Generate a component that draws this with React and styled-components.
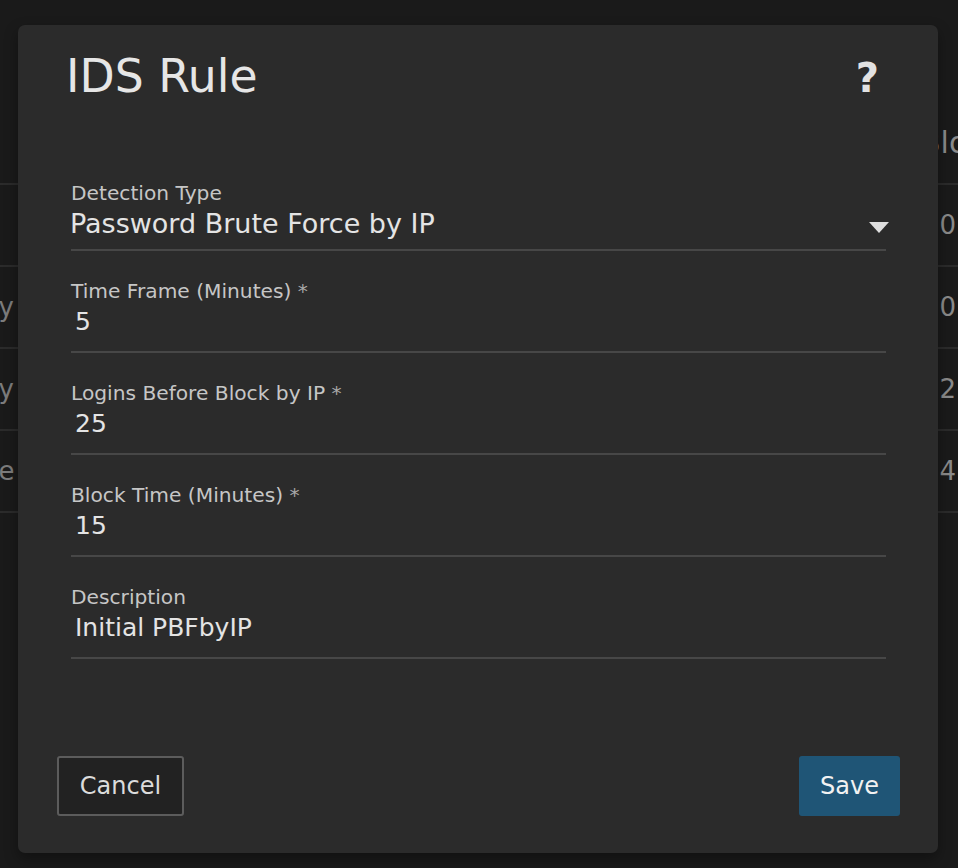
import React from "react";
import styled, { createGlobalStyle } from "styled-components";

const GlobalStyle = createGlobalStyle`
  html, body {
    margin: 0;
    background: #1a1a1a;
    font-family: "DejaVu Sans", "Noto Sans", sans-serif;
  }
  * { box-sizing: border-box; }
`;

const Page = styled.div`
  position: relative;
  width: 958px;
  height: 868px;
  overflow: hidden;
  background: #1a1a1a;
`;

// table of rules behind the dialog, mostly hidden
const BackTable = styled.div`
  padding-top: 102px;
  color: #7c7c7c;
  font-size: 26px;
`;

const BackRow = styled.div`
  display: flex;
  align-items: center;
  height: ${(p) => (p.$head ? "83px" : "82px")};
  border-bottom: 2px solid #2b2b2b;
`;

const NameCell = styled.div`
  flex: 1;
  white-space: nowrap;
  margin-left: ${(p) => p.$shift}px;
  word-spacing: -6px;
`;

const CountCell = styled.div`
  width: 38px;
  white-space: nowrap;
  color: #8a8a8a;
  padding-left: ${(p) => (p.$head ? "0" : "3px")};
  font-size: ${(p) => (p.$head ? "30px" : "26px")};
`;

const Modal = styled.div`
  position: absolute;
  top: 25px;
  left: 18px;
  width: 920px;
  height: 828px;
  background: #2b2b2b;
  border-radius: 7px;
  box-shadow: 0 6px 14px rgba(0, 0, 0, 0.35);
  display: flex;
  flex-direction: column;
  padding-bottom: 37px;
`;

const Header = styled.div`
  display: flex;
  align-items: baseline;
  justify-content: space-between;
  padding: 25px 59px 0 48px;
`;

const Title = styled.h1`
  margin: 0;
  font-size: 45.7px;
  line-height: 54px;
  font-weight: 400;
  color: #e6e6e6;
`;

const HelpButton = styled.button`
  background: none;
  border: none;
  padding: 0;
  font-family: inherit;
  font-size: 40px;
  line-height: 54px;
  font-weight: 700;
  color: #e2e2e2;
  cursor: pointer;
`;

const Form = styled.div`
  margin-top: 48px;
  padding: 0 52px 0 53px;
`;

const Field = styled.div`
  padding-top: 28px;
  padding-bottom: ${(p) => (p.$select ? "10px" : "14px")};
  border-bottom: 2px solid #474747;
`;

const Label = styled.div`
  font-size: 20.2px;
  line-height: 24px;
  color: #c6c6c6;
  white-space: nowrap;
`;

const Required = styled.span`
  color: #a8a8a8;
`;

const SelectRow = styled.div`
  display: flex;
  align-items: center;
  justify-content: space-between;
  margin-top: 4px;
  cursor: pointer;
`;

const SelectValue = styled.div`
  font-size: 27px;
  line-height: 30px;
  color: #e4e4e4;
  margin-left: -1px;
`;

const Caret = styled.svg`
  width: 20px;
  height: 11px;
  margin-top: 6px;
  margin-right: -3px;
`;

const Input = styled.input`
  display: block;
  width: 100%;
  margin-top: 4px;
  padding: 0 0 0 4px;
  height: 30px;
  border: none;
  outline: none;
  background: transparent;
  font-family: inherit;
  font-size: 25px;
  line-height: 30px;
  color: #e4e4e4;
`;

const Footer = styled.div`
  margin-top: auto;
  display: flex;
  justify-content: space-between;
  padding: 0 38px 0 39px;
`;

const Button = styled.button`
  height: 60px;
  width: ${(p) => (p.$primary ? "101px" : "127px")};
  border-radius: 3px;
  border: ${(p) => (p.$primary ? "none" : "2px solid #5c5c5c")};
  background: ${(p) => (p.$primary ? "#1f5576" : "#222222")};
  color: ${(p) => (p.$primary ? "#f2f2f2" : "#dcdcdc")};
  font-family: inherit;
  font-size: 24px;
  cursor: pointer;
`;

const rows = [
  { name: "", shift: 0, count: "10" },
  { name: "by Email", shift: -18, count: "10" },
  { name: "by IP", shift: -18, count: "12" },
  { name: "Username IP", shift: -118, count: "14" },
];

const fields = [
  { label: "Time Frame (Minutes)", value: "5" },
  { label: "Logins Before Block by IP", value: "25" },
  { label: "Block Time (Minutes)", value: "15" },
];

export default function App() {
  return (
    <Page>
      <GlobalStyle />
      <BackTable>
        <BackRow $head>
          <NameCell $shift={0} />
          <CountCell $head>Blocked</CountCell>
        </BackRow>
        {rows.map((r, i) => (
          <BackRow key={i}>
            <NameCell $shift={r.shift}>{r.name}</NameCell>
            <CountCell>{r.count}</CountCell>
          </BackRow>
        ))}
      </BackTable>

      <Modal>
        <Header>
          <Title>IDS Rule</Title>
          <HelpButton>?</HelpButton>
        </Header>

        <Form>
          <Field $select>
            <Label>Detection Type</Label>
            <SelectRow>
              <SelectValue>Password Brute Force by IP</SelectValue>
              <Caret viewBox="0 0 20 11">
                <path d="M0 0 L20 0 L10 11 Z" fill="#dedede" />
              </Caret>
            </SelectRow>
          </Field>

          {fields.map((f) => (
            <Field key={f.label}>
              <Label>
                {f.label} <Required>*</Required>
              </Label>
              <Input defaultValue={f.value} />
            </Field>
          ))}

          <Field>
            <Label>Description</Label>
            <Input defaultValue="Initial PBFbyIP" />
          </Field>
        </Form>

        <Footer>
          <Button>Cancel</Button>
          <Button $primary>Save</Button>
        </Footer>
      </Modal>
    </Page>
  );
}
